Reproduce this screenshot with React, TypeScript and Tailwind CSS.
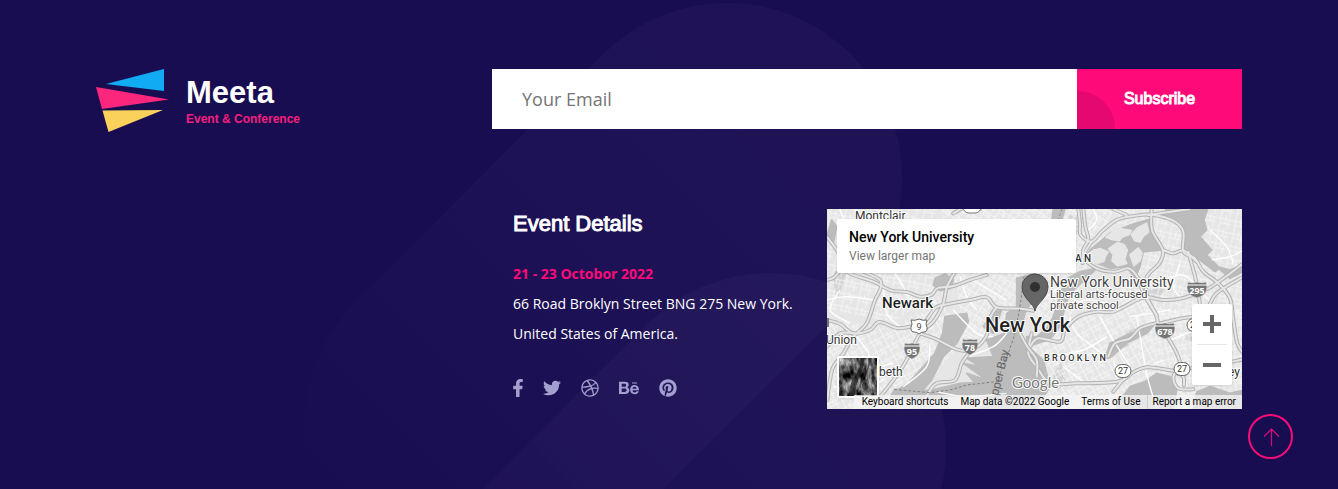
import type { ReactNode } from "react";
import { FaBehance, FaDribbble, FaFacebookF, FaPinterest, FaTwitter } from "react-icons/fa";

type Pt = [number, number];

/** Catmull-Rom curve through every point. */
function curve(raw: string): string {
  const p: Pt[] = raw.split(" ").map((s) => s.split(",").map(Number) as Pt);
  let d = `M${p[0][0]} ${p[0][1]}`;
  for (let i = 0; i < p.length - 1; i++) {
    const a = p[Math.max(i - 1, 0)];
    const b = p[i];
    const c = p[i + 1];
    const e = p[Math.min(i + 2, p.length - 1)];
    d += `C${b[0] + (c[0] - a[0]) / 6} ${b[1] + (c[1] - a[1]) / 6} ${c[0] - (e[0] - b[0]) / 6} ${c[1] - (e[1] - b[1]) / 6} ${c[0]} ${c[1]}`;
  }
  return d;
}

const westRoads = [
  "60,205 100,225 160,245 215,272 260,276 300,290 335,284 352,265 400,258 450,240 500,225",
  "130,215 180,240 180,270 165,300 140,370 100,410 70,460 40,500 30,540 22,600",
  "20,360 60,372 100,400 150,390 178,366 230,384 270,380 310,370 345,325 370,315 450,300 500,292 530,322 600,326 640,332",
  "405,215 380,262 370,310 340,365 300,400 270,460 245,505 205,560 150,625",
  "300,400 350,418 410,448 455,450 498,410 512,350 530,322",
  "450,455 425,490 405,540 350,550 325,580 305,625",
  "20,110 50,150 65,190 45,230 20,240",
  "20,440 60,400 100,400",
  "600,400 622,440 650,480 650,530",
  "480,27 440,20 400,40",
];

const eastRoads = [
  "145,27 150,70 152,105 185,125 215,95 260,60 310,48 365,44 430,62 460,95 460,155 495,175 520,215 565,250 600,295 610,360 622,430 640,460",
  "160,27 166,80 175,118 160,150 158,190",
  "365,27 366,90 398,150 388,190 350,232 352,290 380,350 384,385",
  "398,150 430,160 462,152 500,185",
  "185,125 162,170 200,205 255,215 295,205 325,235 340,280 380,345",
  "384,368 330,385 300,415 255,430 235,470",
  "352,290 400,300 460,294 530,268 590,228 640,190",
  "384,372 450,356 520,340 560,280 640,230",
  "405,400 430,440 450,490 430,530 445,565 490,568",
  "440,520 460,530 462,555",
  "250,575 290,530 350,502 430,512 460,506 530,500 640,478",
  "0,440 25,415 90,425 105,390 145,350 200,335 250,335 320,300 352,290",
  "5,400 -5,460 20,500 60,550 140,550 260,545 300,525",
  "475,155 500,250 512,330",
  "250,27 290,45",
  "355,45 480,27",
];

const westMinor = [
  "60,27 90,130 80,230", "225,220 250,260 270,300", "60,270 30,330 90,370", "20,300 80,290 160,300",
  "190,260 200,340 240,380", "250,280 350,310", "400,330 470,400 520,410", "60,470 150,500 220,490",
  "330,430 320,500 250,560", "110,410 150,470 160,560 120,620", "40,560 130,570 190,540",
  "460,240 510,270 560,300", "420,230 440,290 470,330", "350,575 440,590 560,580", "440,470 520,440 560,400",
];

const eastMinor = [
  "190,27 200,60 170,95", "320,345 350,520 380,625", "60,470 160,450 230,410", "120,350 140,400 230,470",
  "400,240 470,230 560,330", "300,350 420,330", "420,420 510,390 540,420", "540,90 590,140 610,190",
  "545,180 600,170 640,150", "250,480 280,530 400,480", "100,500 180,560", "210,350 250,420 300,500",
  "40,300 90,260 140,240", "100,320 170,300 230,310", "450,190 430,260 460,300",
];

const westWater = [
  "345,235 375,222 400,240 392,265 360,272 340,255",
  "375,350 440,340 445,365 410,430 370,470 335,540 300,580 225,575 265,550 300,510 345,460 368,400",
  "225,568 330,572 420,550 520,545 560,560 520,590 400,588 300,600 210,590",
  "590,235 645,220 650,280 615,340 600,400 625,440 670,480 690,560 650,625 480,625 520,580 470,555 440,520 500,540 430,490 480,500 440,475 520,470 500,420 555,400 560,340 590,320",
  "490,380 520,330 545,330 520,400",
  "20,110 35,60 50,80 40,130",
];

const eastWater = [
  "410,20 535,20 522,60 530,90 510,110 545,150 530,165 570,205 555,215 510,180 465,160 462,90 430,60 400,55",
  "165,175 180,150 240,100 300,75 358,58 372,110 398,150 340,155 330,200 315,235 290,200 240,205 200,190",
  "150,215 105,240 85,300 70,350 50,385 20,410 -10,410 -10,440 60,418 90,380 105,320 120,280 165,240 200,205",
  "70,27 105,27 80,110 60,170 40,170 60,100",
  "225,475 240,430 300,400 370,378 350,400 290,430 245,470",
  "270,600 300,560 345,545 380,520 420,530 440,570 430,625 260,625",
  "560,200 600,210 640,195 640,215 600,235",
  "-10,440 15,480 35,520 45,560 15,590 -10,560",
  "500,575 540,560 600,580 640,570 640,625 490,625",
];

const eastLand = [
  "176,162 192,150 212,146 234,156 226,170 222,184 204,190 186,186", "236,146 262,128 282,134 292,150 284,178 290,190 262,197 246,182 250,164",
  "228,112 250,94 270,86 304,92 296,104 276,112 268,122 244,118", "304,104 322,84 350,70 356,96 340,108 330,126 314,122", "300,165 325,144 336,160 330,182 312,197",
];

const parks = [
  "730,20 770,25 720,130 700,110", "20,200 50,150 60,180 30,270", "680,500 700,465 715,520 690,545",
  "860,395 890,385 905,410 870,415", "900,370 925,360 925,385 905,390", "960,245 1010,240 990,270",
  "1130,440 1165,420 1180,445", "400,100 440,95 440,160 410,160", "1080,360 1110,350 1110,400 1080,390",
];

function Roads({ list, minor = false }: { list: string[]; minor?: boolean }) {
  if (minor) {
    return (
      <g fill="none" stroke="#fff" strokeWidth="4">
        {list.map((r) => (
          <path key={r} d={curve(r)} />
        ))}
      </g>
    );
  }
  return (
    <g fill="none" strokeLinecap="round">
      <g stroke="#b3b3b3" strokeWidth="12">
        {list.map((r) => (
          <path key={r} d={curve(r)} />
        ))}
      </g>
      <g stroke="#e6e6e6" strokeWidth="6">
        {list.map((r) => (
          <path key={r} d={curve(r)} />
        ))}
      </g>
    </g>
  );
}

function Areas({ list, fill }: { list: string[]; fill: string }) {
  return (
    <g fill={fill} stroke={fill} strokeWidth="5" strokeLinejoin="round">
      {list.map((a) => (
        <polygon key={a} points={a} />
      ))}
    </g>
  );
}

function Streets({ id, angle, w, h }: { id: string; angle: number; w: number; h: number }) {
  return (
    <pattern id={id} width={w} height={h} patternUnits="userSpaceOnUse" patternTransform={`rotate(${angle})`}>
      <path
        d={`M0 ${h / 4}H${w}M${w / 4} 0V${h}M${w / 4} ${h * 0.6}H${w}M${w * 0.6} 0V${h * 0.6}M${w * 0.8} ${h / 4}V${h}`}
        stroke="#f7f7f7" strokeWidth="2.5" fill="none"
      />
    </pattern>
  );
}

function Interstate({ x, y, label }: { x: number; y: number; label: string }) {
  const w = label.length > 2 ? 10 : 8;
  return (
    <g transform={`translate(${x} ${y})`}>
      <path
        d={`M${-w + 1} -8Q${-w / 2} -6.5 0 -8Q${w / 2} -6.5 ${w - 1} -8Q${w + 1} -3 ${w - 1} 2Q${w - 3} 6 0 8Q${-w + 3} 6 ${-w + 1} 2Q${-w - 1} -3 ${-w + 1} -8Z`}
        fill="#747474" stroke="#eee" strokeWidth="0.5"
      />
      <path d={`M${-w} -5H${w}`} stroke="#fff" strokeWidth="1" />
      <text y="4" textAnchor="middle" fontSize="9" fontWeight="700" fill="#fff" className="font-['Open_Sans',sans-serif]">{label}</text>
    </g>
  );
}

function RouteOval({ x, y, label }: { x: number; y: number; label: string }) {
  return (
    <g transform={`translate(${x} ${y})`}>
      <rect x="-8" y="-6.5" width="16" height="13" rx="6.5" fill="#fff" stroke="#666" strokeWidth="1" />
      <text y="3" textAnchor="middle" fontSize="9" fill="#333">{label}</text>
    </g>
  );
}

function MapDrawing() {
  return (
    <svg viewBox="0 0 415 200" preserveAspectRatio="xMidYMid slice" className="absolute inset-0 size-full font-[Roboto,sans-serif]" aria-hidden="true">
      <defs>
        <Streets id="st-a" angle={12} w={46} h={38} />
        <Streets id="st-b" angle={-28} w={40} h={34} />
        <Streets id="st-c" angle={-12} w={36} h={34} />
        <Streets id="st-d" angle={32} w={36} h={28} />
      </defs>
      <rect width="415" height="200" fill="#e6e6e6" />
      <g transform="scale(0.33333)">
        <Areas list={parks} fill="#d3d3d3" />
        <path d="M0 0H330L350 230L200 340L0 300Z" fill="url(#st-a)" />
        <path d="M0 330L200 360L330 260L420 380L240 600H0Z" fill="url(#st-b)" />
        <path d="M340 0H620L570 340L420 400Z" fill="url(#st-d)" />
        <path d="M620 0H860L740 330L620 400Z" fill="url(#st-d)" />
        <path d="M740 330L950 200L1000 600H600V430Z" fill="url(#st-b)" />
        <path d="M860 0H1245V330L960 340Z" fill="url(#st-a)" />
        <path d="M960 300H1245V600H1000Z" fill="url(#st-c)" />
        <g transform="translate(-21 -27)">
          <Areas list={westWater} fill="#bcbcbc" />
          <Roads list={westMinor} minor />
        </g>
        <g transform="translate(609 -27)">
          <Areas list={eastWater} fill="#bcbcbc" />
          <Areas list={eastLand} fill="#e6e6e6" />
          <Roads list={eastMinor} minor />
          <Roads list={eastRoads} />
        </g>
        <g transform="translate(-21 -27)">
          <Roads list={westRoads} />
          <path d="M612 230L600 320L585 400L565 460L530 545L440 555L390 570L330 578L220 568" fill="none" stroke="#808080" strokeWidth="3" strokeDasharray="8 6" />
        </g>
        <path d="M705 0L680 70L655 120" fill="none" stroke="#909090" strokeWidth="3" strokeDasharray="8 6" />
      </g>
      <g stroke="#fff" strokeWidth="2" strokeLinejoin="round" fill="#333" className="[paint-order:stroke]">
        <text x="28" y="11" fontSize="12">Montclair</text>
        <text x="55" y="99" fontSize="15" fontWeight="500" fill="#222">Newark</text>
        <text x="-1" y="135" fontSize="12">Union</text>
        <text x="52" y="167" fontSize="12">beth</text>
        <text x="158" y="123" fontSize="20" fontWeight="500" fill="#222">New York</text>
        <text x="248" y="53" fontSize="10" fontWeight="500">A N</text>
        <text x="223" y="78" fontSize="14" fill="#444">New York University</text>
        <text x="223" y="89" fontSize="11" fill="#444">Liberal arts-focused</text>
        <text x="223" y="100" fontSize="11" fill="#444">private school</text>
        <text x="217" y="152" fontSize="9" fontWeight="500">B R O O K L Y N</text>
        <text x="401" y="167" fontSize="12">ey</text>
      </g>
      <text x="171" y="187" fontSize="12" fill="#666" transform="rotate(-76 171 187)">pper Bay</text>
      <g transform="translate(92 117)">
        <path d="M-8 -6Q-4 -5 0 -7Q4 -5 8 -6L7 -2Q10 6 5 6Q2 6 0 8Q-2 6 -5 6Q-10 6 -7 -2Z" fill="#fff" stroke="#666" strokeWidth="1" />
        <text y="4" textAnchor="middle" fontSize="9" fill="#444">9</text>
      </g>
      <rect x="136" y="-9" width="18" height="13" rx="6" fill="#fff" stroke="#777" />
      <rect x="-5" y="109" width="7" height="9" fill="#747474" />
      <Interstate x={85} y={142} label="95" />
      <Interstate x={143} y={138} label="78" />
      <Interstate x={370} y={81} label="295" />
      <Interstate x={338} y={122} label="678" />
      <RouteOval x={296} y={162} label="27" />
      <RouteOval x={355} y={160} label="27" />
      <RouteOval x={368} y={116} label="25" />
      <path d="M208 102C207 94 195 90 195 77.500A13 12.500 0 0 1 221 77.500C221 90 209 94 208 102Z" fill="#666" stroke="#4c4c4c" strokeWidth="1" />
      <circle cx="208" cy="78" r="5" fill="#303030" />
      <text x="185" y="179" fontSize="15" fill="#777" stroke="#fff" strokeWidth="2" className="font-[Lato,sans-serif] [paint-order:stroke]">Google</text>
    </svg>
  );
}

function SatelliteThumb() {
  return (
    <svg viewBox="0 0 38 38" className="size-full" aria-hidden="true">
      <filter id="terrain" x="0" y="0" width="1" height="1" colorInterpolationFilters="sRGB">
        <feTurbulence type="fractalNoise" baseFrequency="0.18 0.09" numOctaves="4" seed="5" />
        <feColorMatrix values="1.3 0 0 0 -0.3 1.3 0 0 0 -0.3 1.3 0 0 0 -0.3 0 0 0 0 1" />
      </filter>
      <rect width="38" height="38" fill="#555" filter="url(#terrain)" />
      <path d="M21 0Q23 9 16 18T12 38H16Q17 25 21 18T25 0Z" fill="#1c1c1c" opacity=".7" />
      <path d="M30 0Q31 9 26 16T21 30" fill="none" stroke="#1c1c1c" strokeWidth="1.500" opacity=".6" />
    </svg>
  );
}

function EventMap() {
  return (
    <section aria-label="Map" className="relative h-[200px] overflow-hidden bg-[#e6e6e6] font-[Roboto,sans-serif]">
      <MapDrawing />
      <div className="absolute top-[10px] left-[10px] w-[239px] rounded-xs bg-white px-3 pt-2 pb-2 shadow">
        <p className="text-[14px] leading-5 font-medium text-black">New York University</p>
        <a href="#map" className="block text-[12px] leading-[18px] text-[#757575]">View larger map</a>
      </div>
      <button type="button" aria-label="Show satellite imagery" className="absolute bottom-[11px] left-[10px] size-[42px] overflow-hidden rounded-xs border-2 border-white shadow">
        <SatelliteThumb />
      </button>
      <div className="absolute right-[10px] bottom-6 flex w-10 flex-col items-center rounded-xs bg-white shadow">
        <button type="button" aria-label="Zoom in" className="flex h-10 w-full items-center justify-center">
          <svg viewBox="0 0 18 18" className="size-[18px] fill-[#666]"><path d="M7 0h4v7h7v4h-7v7H7v-7H0V7h7z" /></svg>
        </button>
        <div className="h-px w-[30px] bg-[#e6e6e6]" />
        <button type="button" aria-label="Zoom out" className="flex h-10 w-full items-center justify-center">
          <svg viewBox="0 0 18 18" className="size-[18px] fill-[#666]"><path d="M0 7h18v4H0z" /></svg>
        </button>
      </div>
      <div className="absolute right-0 bottom-0 flex h-[14px] items-center bg-[#f5f5f5]/75 pr-[6px] pl-2 text-[10px] leading-[14px] whitespace-nowrap text-black">
        <button type="button" className="pr-3">Keyboard shortcuts</button>
        <span className="pr-3">Map data ©2022 Google</span>
        <a href="#terms" className="pr-[6px]">Terms of Use</a>
        <a href="#report" className="border-l border-[#ccc] pl-[5px]">Report a map error</a>
      </div>
    </section>
  );
}

function Logo() {
  return (
    <a href="#home" className="flex items-start gap-4">
      <svg viewBox="0 0 74 64" className="h-16 w-[74px]" aria-hidden="true">
        <path d="M10 15L68 0V22Z" fill="#10abf3" />
        <path d="M0 18L73 30.500L6 40Z" fill="#fd267d" />
        <path d="M6.500 41.500L67 41L12.500 63Z" fill="#fad15a" />
      </svg>
      <span className="flex flex-col pt-[6px] font-['Liberation_Sans',Arial,sans-serif] font-bold">
        <span className="text-[31px] leading-9 text-white">Meeta</span>
        <span className="text-[12px] leading-4 text-[#f41f7c]">Event &amp; Conference</span>
      </span>
    </a>
  );
}

function Backdrop() {
  return (
    <svg viewBox="0 0 1338 489" preserveAspectRatio="xMidYMin slice" className="absolute inset-0 size-full" aria-hidden="true">
      <defs>
        <linearGradient id="fade" x1="0" y1="0" x2="1" y2="0">
          <stop offset="0" stopColor="#fff" stopOpacity="0" />
          <stop offset="0.6" stopColor="#fff" stopOpacity="0.022" />
          <stop offset="1" stopColor="#fff" stopOpacity="0.026" />
        </linearGradient>
      </defs>
      <rect x="-525" y="-175" width="700" height="350" rx="175" fill="url(#fade)" transform="translate(727 178) rotate(-45)" />
      <rect x="-525" y="-175" width="700" height="350" rx="175" fill="url(#fade)" transform="translate(771 448) rotate(-45)" />
    </svg>
  );
}

const socials: { label: string; icon: ReactNode }[] = [
  { label: "Facebook", icon: <FaFacebookF className="-mx-1" /> },
  { label: "Twitter", icon: <FaTwitter /> },
  { label: "Dribbble", icon: <FaDribbble /> },
  { label: "Behance", icon: <FaBehance className="size-5" /> },
  { label: "Pinterest", icon: <FaPinterest /> },
];

export default function App() {
  return (
    <footer className="relative min-h-screen overflow-hidden bg-[#190d52] px-6 pt-[69px] pb-20 font-['Open_Sans',sans-serif] text-white">
      <Backdrop />
      <div className="relative mx-auto max-w-[1146px]">
        <div className="flex flex-wrap items-start justify-between gap-8">
          <Logo />
          <form className="flex h-[60px] w-full max-w-[750px]" onSubmit={(e) => e.preventDefault()}>
            <input
              type="email"
              aria-label="Your Email"
              placeholder="Your Email"
              className="min-w-0 flex-1 bg-white px-[30px] text-[18px] text-gray-800 outline-none placeholder:text-[#757575]"
            />
            <button type="submit" className="relative w-[165px] overflow-hidden bg-[#ff0a78] font-['Liberation_Sans',Arial,sans-serif] text-[16px] [-webkit-text-stroke:1px_#fff]">
              <span className="absolute -bottom-[37px] -left-[37px] size-[75px] rounded-full bg-[#e50870]" />
              <span className="relative">Subscribe</span>
            </button>
          </form>
        </div>

        <div className="mt-[76px] ml-auto flex w-full max-w-[729px] flex-wrap justify-between gap-y-8">
          <div>
            <h3 className="font-['Liberation_Sans',Arial,sans-serif] text-[22px] leading-[30px] font-normal [-webkit-text-stroke:1px_#fff]">Event Details</h3>
            <div className="mt-5 text-[14px] leading-[30px]">
              <p className="font-bold text-[#ff0a78]">21 - 23 Octobor 2022</p>
              <p>66 Road Broklyn Street BNG 275 New York.</p>
              <p>United States of America.</p>
            </div>
            <ul className="mt-[30px] flex h-[18px] items-center gap-5 text-[18px] text-[#a3a0d0]">
              {socials.map((s) => (
                <li key={s.label}>
                  <a href={`#${s.label.toLowerCase()}`} aria-label={s.label} className="block">{s.icon}</a>
                </li>
              ))}
            </ul>
          </div>
          <div className="w-full max-w-[415px]">
            <EventMap />
          </div>
        </div>
      </div>

      <button type="button" aria-label="Back to top" className="fixed right-[45px] bottom-[30px] flex size-[45px] items-center justify-center rounded-full border-2 border-[#f80c78]">
        <svg viewBox="0 0 18 18" className="size-[18px]" fill="none" stroke="#d80b74" strokeWidth="1.200"><path d="M9.500 18V1M2 8.500L9.500 1L17 8.500" /></svg>
      </button>
    </footer>
  );
}
